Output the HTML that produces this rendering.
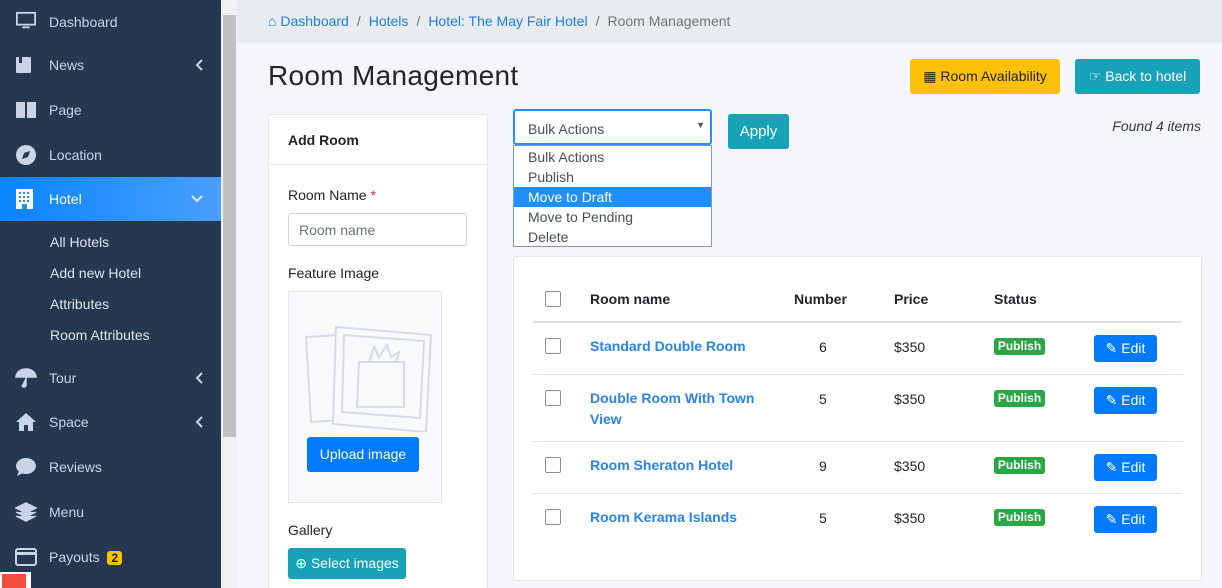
<!DOCTYPE html>
<html><head><meta charset="utf-8"><style>
*{box-sizing:border-box;margin:0;padding:0}
html,body{width:1222px;height:588px;overflow:hidden}
body{font-family:"Liberation Sans",sans-serif;font-size:14px;color:#212529;background:#f4f6f9;position:relative}
.sb{position:absolute;left:0;top:0;width:221px;height:588px;background:#263750}
.it{position:absolute;left:0;width:221px;height:44px;color:#c9d5e6;font-size:14px;display:flex;align-items:center}
.it .ic{position:absolute;left:15px;width:22px;height:22px}
.it span{position:absolute;left:49px}
.it .ch{position:absolute;left:195px;top:15px;width:10px;height:14px}
.act{background:linear-gradient(90deg,#0a84ff,#4a9fff);color:#fff}
.sub{position:absolute;left:50px;color:#dde4ee;font-size:14px}
.scr{position:absolute;left:221px;top:0;width:16px;height:588px;background:#f1f1f1}
.thumb{position:absolute;left:223px;top:15px;width:13px;height:422px;background:#c1c1c1}
.bc{position:absolute;left:237px;top:0;width:985px;height:43px;background:#e9ecef;padding:13px 0 0 31px;font-size:14px;color:#6c757d}
.bc a{color:#1a7fe8;text-decoration:none}
.bc i{font-style:normal;margin:0 8px;color:#6c757d}
h1{position:absolute;left:268px;top:60px;font-size:28px;font-weight:500;color:#212529;letter-spacing:0.3px}
.btn{position:absolute;border-radius:3px;font-size:14px;display:flex;align-items:center;justify-content:center}
.card{position:absolute;background:#fff;border:1px solid #e3e6ea;border-radius:3px}
.lbl{position:absolute;left:288px;font-size:14px;color:#212529}
.row{position:absolute;left:533px;width:649px;border-top:1px solid #dee2e6}
.cb{position:absolute;left:545px;width:16px;height:16px;border:1px solid #8f8f8f;border-radius:2px;background:#fff}
.nm{position:absolute;left:590px;color:#2884e8;font-weight:bold;font-size:14px;line-height:21px}
.num{position:absolute;left:819px;font-size:14px}
.pr{position:absolute;left:894px;font-size:14px}
.pub{position:absolute;left:994px;width:51px;height:17px;background:#28a745;color:#fff;font-weight:bold;font-size:12px;border-radius:3px;text-align:center;line-height:17px}
.ed{position:absolute;left:1094px;width:63px;height:27px;background:#007bff;color:#fff;border-radius:3px;font-size:14px;display:flex;align-items:center;justify-content:center}
</style></head><body>
<div class="sb">
<div class="it" style="top:0"><svg class="ic" viewBox="0 0 22 22" style="left:15px;top:11px;height:20px"><rect x="1" y="2" width="20" height="13" fill="none" stroke="#c9d5e6" stroke-width="2"/><rect x="7" y="17" width="8" height="2" fill="#c9d5e6"/></svg><span>Dashboard</span></div>
<div class="it" style="top:43px"><svg class="ic" viewBox="0 0 22 22"><rect x="1" y="3" width="15" height="16" rx="1" fill="#c9d5e6"/><rect x="4" y="3" width="3" height="6" fill="#263750"/></svg><span>News</span><svg class="ch" viewBox="0 0 10 14"><path d="M7 2L2 7l5 5" fill="none" stroke="#c9d5e6" stroke-width="2"/></svg></div>
<div class="it" style="top:88px"><svg class="ic" viewBox="0 0 22 22"><path d="M1 3h9v16H1zM12 3h9v16h-9z" fill="#c9d5e6"/></svg><span>Page</span></div>
<div class="it" style="top:133px"><svg class="ic" viewBox="0 0 22 22"><circle cx="11" cy="11" r="10" fill="#c9d5e6"/><path d="M15 7l-6 2-2 6 6-2z" fill="#263750"/></svg><span>Location</span></div>
<div class="it act" style="top:177px"><svg class="ic" viewBox="0 0 22 22"><rect x="1" y="1" width="17" height="20" fill="#fff"/><g fill="#2a8cff"><rect x="4" y="4" width="2" height="2"/><rect x="8" y="4" width="2" height="2"/><rect x="12" y="4" width="2" height="2"/><rect x="4" y="8" width="2" height="2"/><rect x="8" y="8" width="2" height="2"/><rect x="12" y="8" width="2" height="2"/><rect x="4" y="12" width="2" height="2"/><rect x="8" y="12" width="2" height="2"/><rect x="12" y="12" width="2" height="2"/><rect x="7" y="16" width="5" height="5"/></g></svg><span>Hotel</span><svg class="ch" viewBox="0 0 14 10" style="width:14px;height:10px;top:17px;left:190px"><path d="M2 2l5 5 5-5" fill="none" stroke="#dbe6f5" stroke-width="2"/></svg></div>
<div class="sub" style="top:234px">All Hotels</div>
<div class="sub" style="top:265px">Add new Hotel</div>
<div class="sub" style="top:296px">Attributes</div>
<div class="sub" style="top:327px">Room Attributes</div>
<div class="it" style="top:356px"><svg class="ic" viewBox="0 0 22 22"><path d="M1 10a10 8 0 0 1 20 0zM11 10v8a2 2 0 0 1-4 0" fill="#c9d5e6" stroke="#c9d5e6" stroke-width="1.5"/></svg><span>Tour</span><svg class="ch" viewBox="0 0 10 14"><path d="M7 2L2 7l5 5" fill="none" stroke="#c9d5e6" stroke-width="2"/></svg></div>
<div class="it" style="top:400px"><svg class="ic" viewBox="0 0 22 22"><path d="M11 2L1 11h3v9h5v-6h4v6h5v-9h3z" fill="#c9d5e6"/></svg><span>Space</span><svg class="ch" viewBox="0 0 10 14"><path d="M7 2L2 7l5 5" fill="none" stroke="#c9d5e6" stroke-width="2"/></svg></div>
<div class="it" style="top:445px"><svg class="ic" viewBox="0 0 22 22"><ellipse cx="11" cy="10" rx="10" ry="8" fill="#c9d5e6"/><path d="M4 15l-2 5 6-3z" fill="#c9d5e6"/></svg><span>Reviews</span></div>
<div class="it" style="top:490px"><svg class="ic" viewBox="0 0 22 22"><path d="M11 2l10 5-10 5L1 7z M1 11l10 5 10-5M1 15l10 5 10-5" fill="#c9d5e6" stroke="#c9d5e6" stroke-width="1.5"/></svg><span>Menu</span></div>
<div class="it" style="top:535px"><svg class="ic" viewBox="0 0 22 22"><rect x="1" y="3" width="20" height="16" rx="2" fill="none" stroke="#c9d5e6" stroke-width="2"/><rect x="1" y="6" width="20" height="3" fill="#c9d5e6"/></svg><span>Payouts <b style="background:#ffc107;color:#212529;font-size:12px;border-radius:3px;padding:0 4px;margin-left:4px">2</b></span></div>
<div style="position:absolute;left:0;top:572px;width:31px;height:16px;background:#fff"><div style="margin:2px;width:24px;height:14px;background:#ef4f3c"></div></div>
</div>
<div class="scr"></div><div class="thumb"></div>
<div class="bc"><a>&#8962; Dashboard</a><i>/</i><a>Hotels</a><i>/</i><a>Hotel: The May Fair Hotel</a><i>/</i>Room Management</div>
<h1>Room Management</h1>
<div class="btn" style="left:910px;top:59px;width:150px;height:35px;background:#ffc107;color:#212529">&#9638; Room Availability</div>
<div class="btn" style="left:1075px;top:59px;width:125px;height:35px;background:#17a2b8;color:#fff">&#9758; Back to hotel</div>
<div class="card" style="left:268px;top:114px;width:220px;height:480px">
<div style="height:50px;border-bottom:1px solid #e3e6ea;padding:17px 0 0 19px;font-weight:bold">Add Room</div></div>
<div class="lbl" style="top:187px">Room Name <span style="color:#dc3545">*</span></div>
<div style="position:absolute;left:288px;top:213px;width:179px;height:33px;border:1px solid #ced4da;border-radius:3px;padding:8px 10px;color:#6c757d">Room name</div>
<div class="lbl" style="top:265px">Feature Image</div>
<div style="position:absolute;left:288px;top:291px;width:154px;height:212px;background:#f8f9fb;border:1px solid #e3e6ea">
<svg width="154" height="140" viewBox="0 0 154 140" style="position:absolute;left:0;top:0"><g fill="none" stroke="#d6dbe8" stroke-width="2"><path d="M17 45l80-5 5 85-80 5z"/><path d="M47 35l95 8-5 97-93-8z" fill="#f8f9fb"/><path d="M55 43l80 6-4 77-78-6z"/><path d="M70 70h45v45H68z"/><path d="M80 70l5-15 5 10 8-12 4 12 8-5-3 10"/></g></svg>
<div style="position:absolute;left:18px;top:145px;width:112px;height:35px;background:#007bff;border-radius:3px;color:#fff;text-align:center;line-height:35px">Upload image</div></div>
<div class="lbl" style="top:522px">Gallery</div>
<div class="btn" style="left:288px;top:548px;width:118px;height:31px;background:#17a2b8;color:#fff">&#8853; Select images</div>
<div style="position:absolute;left:513px;top:109px;width:199px;height:36px;border:2px solid #2a8cff;border-radius:3px;background:#fff;padding:10px 0 0 13px;color:#495057">Bulk Actions<span style="position:absolute;right:5px;top:9px;font-size:9px">&#9660;</span></div>
<div style="position:absolute;left:513px;top:145px;width:199px;height:102px;border:1px solid #7f9db9;background:#fff;color:#495057;line-height:20px">
<div style="padding-left:14px;margin-top:1px">Bulk Actions</div><div style="padding-left:14px">Publish</div><div style="padding-left:14px;background:#1e90ff;color:#fff">Move to Draft</div><div style="padding-left:14px">Move to Pending</div><div style="padding-left:14px">Delete</div></div>
<div class="btn" style="left:728px;top:114px;width:61px;height:35px;background:#17a2b8;color:#fff;font-size:15px">Apply</div>
<div style="position:absolute;right:21px;top:118px;font-style:italic;color:#343a40">Found 4 items</div>
<div class="card" style="left:513px;top:256px;width:689px;height:325px"></div>
<div class="cb" style="top:291px"></div>
<div style="position:absolute;top:291px;font-weight:bold;left:590px">Room name</div>
<div style="position:absolute;top:291px;font-weight:bold;left:794px">Number</div>
<div style="position:absolute;top:291px;font-weight:bold;left:894px">Price</div>
<div style="position:absolute;top:291px;font-weight:bold;left:994px">Status</div>
<div class="row" style="top:321px;border-top:2px solid #dee2e6"></div>
<div class="row" style="top:374px"></div><div class="row" style="top:441px"></div><div class="row" style="top:493px"></div>
<div class="cb" style="top:338px"></div><div class="nm" style="top:336px">Standard Double Room</div><div class="num" style="top:339px">6</div><div class="pr" style="top:339px">$350</div><div class="pub" style="top:338px">Publish</div><div class="ed" style="top:335px">&#9998; Edit</div>
<div class="cb" style="top:390px"></div><div class="nm" style="top:388px">Double Room With Town<br>View</div><div class="num" style="top:391px">5</div><div class="pr" style="top:391px">$350</div><div class="pub" style="top:390px">Publish</div><div class="ed" style="top:387px">&#9998; Edit</div>
<div class="cb" style="top:457px"></div><div class="nm" style="top:455px">Room Sheraton Hotel</div><div class="num" style="top:458px">9</div><div class="pr" style="top:458px">$350</div><div class="pub" style="top:457px">Publish</div><div class="ed" style="top:454px">&#9998; Edit</div>
<div class="cb" style="top:509px"></div><div class="nm" style="top:507px">Room Kerama Islands</div><div class="num" style="top:510px">5</div><div class="pr" style="top:510px">$350</div><div class="pub" style="top:509px">Publish</div><div class="ed" style="top:506px">&#9998; Edit</div>
</body></html>
